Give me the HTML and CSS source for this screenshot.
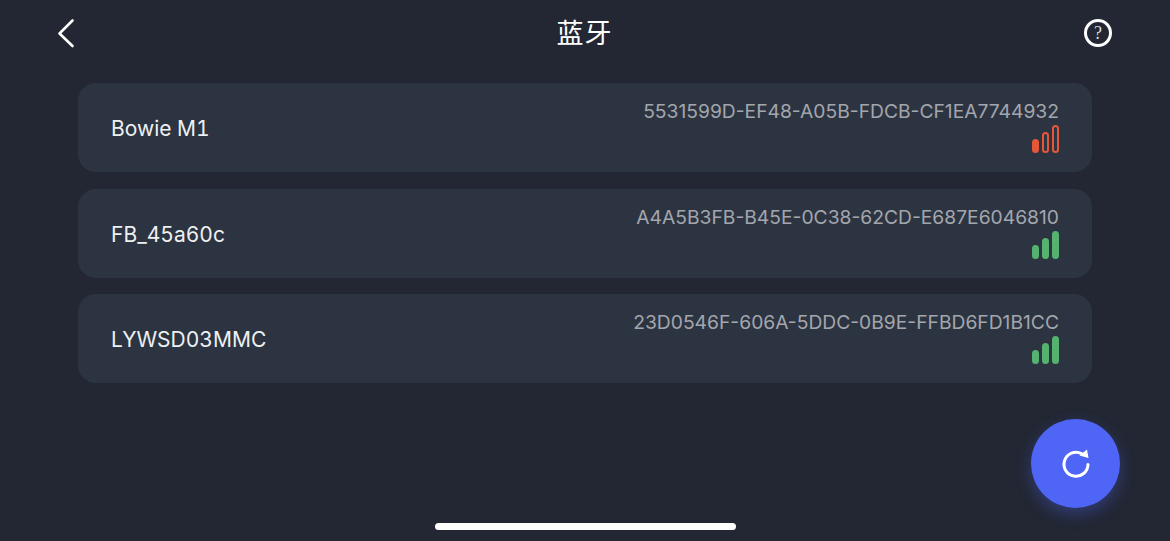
FILE: index.html
```html
<!DOCTYPE html>
<html lang="zh">
<head>
    <meta charset="UTF-8">
    <title>蓝牙</title>
    <link rel="stylesheet" href="styles.css">
</head>
<body>

<div class="screen">
    <header class="topbar">
        <svg class="back-icon" width="18" height="30" viewBox="0 0 18 30">
            <path d="M15.5 2.5 L2.5 15.5 L15.5 28" fill="none" stroke="#fff" stroke-width="2.6" stroke-linecap="round" stroke-linejoin="round"/>
        </svg>
        <h1>蓝牙</h1>
        <div class="help-icon">?</div>
    </header>

    <div class="device-list">
        <div class="device">
            <span class="device-name">Bowie M1</span>
            <div class="device-info">
                <span class="device-id">5531599D-EF48-A05B-FDCB-CF1EA7744932</span>
                <div class="signal weak">
                    <i class="bar bar1 on"></i>
                    <i class="bar bar2"></i>
                    <i class="bar bar3"></i>
                </div>
            </div>
        </div>
        <div class="device">
            <span class="device-name">FB_45a60c</span>
            <div class="device-info">
                <span class="device-id">A4A5B3FB-B45E-0C38-62CD-E687E6046810</span>
                <div class="signal good">
                    <i class="bar bar1 on"></i>
                    <i class="bar bar2 on"></i>
                    <i class="bar bar3 on"></i>
                </div>
            </div>
        </div>
        <div class="device">
            <span class="device-name">LYWSD03MMC</span>
            <div class="device-info">
                <span class="device-id">23D0546F-606A-5DDC-0B9E-FFBD6FD1B1CC</span>
                <div class="signal good">
                    <i class="bar bar1 on"></i>
                    <i class="bar bar2 on"></i>
                    <i class="bar bar3 on"></i>
                </div>
            </div>
        </div>
    </div>

    <button class="refresh-btn">
        <svg width="30" height="30" viewBox="0 0 30 30">
            <path d="M20.5 4.6 A12 12 0 1 0 27 15.5" fill="none" stroke="#fff" stroke-width="3" stroke-linecap="round"/>
            <path d="M26 0.5 L27.5 9 L18.5 6.5 Z" fill="#fff"/>
        </svg>
    </button>

    <div class="home-bar"></div>
</div>

</body>
</html>
```

FILE: styles.css
```css
/* Global Styles */
body {
    margin: 0;
    background: #222733;
    color: #fff;
    font-family: Inter, "Noto Sans CJK SC", sans-serif;
}

.screen {
    position: relative;
    width: 1170px;
    height: 541px;
    overflow: hidden;
}

/* Top Bar */
.topbar {
    display: grid;
    grid-template-columns: 1fr auto 1fr;
    align-items: center;
    height: 66px;
    padding: 0 58px 0 57px;
}

.topbar h1 {
    margin: 0 0 4px;
    font-size: 27px;
    font-weight: 400;
    letter-spacing: 1px;
}

.help-icon {
    box-sizing: border-box;
    justify-self: end;
    width: 28px;
    height: 28px;
    border: 3px solid #fff;
    border-radius: 50%;
    font-family: "Liberation Serif", serif;
    font-size: 18px;
    line-height: 22px;
    text-align: center;
    color: #d9dbdf;
}

/* Device List */
.device-list {
    display: flex;
    flex-direction: column;
    gap: 16.5px;
    margin: 17px 78px 0;
}

.device {
    display: flex;
    align-items: center;
    justify-content: space-between;
    height: 89px;
    padding: 0 33px;
    background: #2d3441;
    border-radius: 18px;
}

.device-name {
    margin-top: 2px;
    font-size: 21px;
    font-variant-numeric: tabular-nums;
    color: #eef0f2;
}

.device-info {
    display: flex;
    flex-direction: column;
    align-items: flex-end;
    margin-bottom: 3px;
}

.device-id {
    font-size: 19.25px;
    line-height: 24px;
    color: #a3a6ad;
}

/* Signal Bars */
.signal {
    display: flex;
    align-items: flex-end;
    gap: 2.5px;
    height: 28px;
    margin-top: 2px;
}

.bar {
    box-sizing: border-box;
    width: 7.5px;
    border: 2px solid;
    border-radius: 4px;
}

.bar1 { height: 14px; }
.bar2 { height: 21px; }
.bar3 { height: 28px; }

.weak .bar { border-color: #e6573a; }
.weak .on { background: #e6573a; }
.good .bar { border-color: #55b26f; }
.good .on { background: #55b26f; }

/* Refresh Button */
.refresh-btn {
    position: absolute;
    left: 1031px;
    top: 419px;
    display: flex;
    align-items: center;
    justify-content: center;
    width: 89px;
    height: 89px;
    padding: 0;
    border: none;
    border-radius: 50%;
    background: #4f65f6;
    box-shadow: 0 6px 16px rgba(79, 101, 246, 0.35);
}

.home-bar {
    position: absolute;
    left: 435px;
    top: 523px;
    width: 301px;
    height: 7px;
    background: #fff;
    border-radius: 4px;
}
```
